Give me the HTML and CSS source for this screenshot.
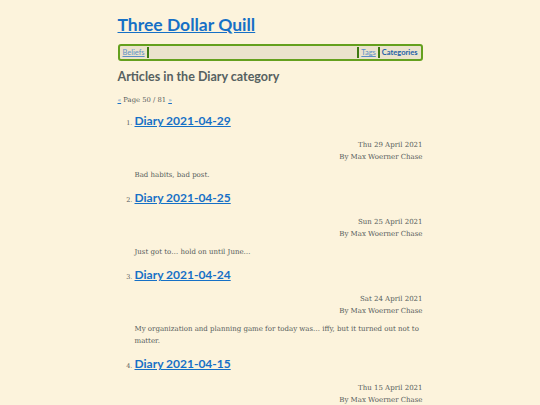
FILE: index.html
```html
<!DOCTYPE html>
<html>
<head>
<meta charset="utf-8">
<link rel="stylesheet" href="styles.css">
</head>
<body>
<div class="page">
  <header class="site-header">
    <h1 class="site-title"><a href="#">Three Dollar Quill</a></h1>
    <nav class="nav">
      <a class="nav-link" href="#">Beliefs</a>
      <span class="sep"></span>
      <span class="spacer"></span>
      <span class="sep"></span>
      <a class="nav-link" href="#">Tags</a>
      <span class="sep"></span>
      <a class="nav-link current" href="#">Categories</a>
    </nav>
  </header>
  <main>
    <h2 class="page-heading">Articles in the Diary category</h2>
    <p class="pager"><a href="#">«</a> Page 50 / 81 <a href="#">»</a></p>
    <ol class="articles">
      <li class="article">
        <h3 class="article-title"><a href="#">Diary 2021-04-29</a></h3>
        <div class="meta">
          <div>Thu 29 April 2021</div>
          <div>By Max Woerner Chase</div>
        </div>
        <p class="summary">Bad habits, bad post.</p>
      </li>
      <li class="article">
        <h3 class="article-title"><a href="#">Diary 2021-04-25</a></h3>
        <div class="meta">
          <div>Sun 25 April 2021</div>
          <div>By Max Woerner Chase</div>
        </div>
        <p class="summary">Just got to… hold on until June…</p>
      </li>
      <li class="article">
        <h3 class="article-title"><a href="#">Diary 2021-04-24</a></h3>
        <div class="meta">
          <div>Sat 24 April 2021</div>
          <div>By Max Woerner Chase</div>
        </div>
        <p class="summary">My organization and planning game for today was… iffy, but it turned out not to matter.</p>
      </li>
      <li class="article">
        <h3 class="article-title"><a href="#">Diary 2021-04-15</a></h3>
        <div class="meta">
          <div>Thu 15 April 2021</div>
          <div>By Max Woerner Chase</div>
        </div>
        <p class="summary">More text.</p>
      </li>
    </ol>
  </main>
</div>
</body>
</html>
```
FILE: styles.css
```css
html, body {
  margin: 0;
  padding: 0;
  background: #fcf3dc;
}
body {
  font-family: "DejaVu Serif", serif;
  color: #555b5b;
}
.page {
  width: 305px;
  margin: 0 auto;
  padding-top: 14px;
}
a {
  color: #1b72c8;
}
.site-title {
  font-family: Lato, "Open Sans", sans-serif;
  font-size: 17.5px;
  font-weight: 700;
  margin: 0;
  line-height: 22px;
}
.site-title a {
  color: #1670c6;
}
.nav {
  margin-top: 8px;
  display: flex;
  align-items: center;
  height: 13px;
  border: 2px solid #64a01e;
  border-radius: 3px;
  background: #ebe3cd;
  padding: 0 1px 0 3px;
  font-family: Lato, "Open Sans", sans-serif;
  font-size: 7.5px;
}
.nav-link {
  color: #5b8fc6;
  padding: 0 2px 0 0;
}
.nav-link.current {
  color: #1d5fa6;
  font-weight: 700;
  text-decoration: none;
  padding-left: 2px;
}
.sep {
  width: 2px;
  height: 11px;
  background: #3d7a12;
}
.spacer {
  flex: 1;
  align-self: stretch;
}
.sep + .nav-link {
  padding-left: 2px;
}
.page-heading {
  font-family: Lato, "Open Sans", sans-serif;
  font-size: 12.5px;
  font-weight: 700;
  color: #566161;
  margin: 8px 0 0;
  line-height: 16px;
}
.pager {
  font-size: 6.8px;
  margin: 10px 0 0;
  line-height: 10px;
  color: #555b5b;
}
.pager a {
  font-size: 6px;
}
.articles {
  margin: 8px 0 0;
  padding-left: 17px;
  font-size: 6.5px;
}
.article {
  margin-bottom: 9px;
}
.article::marker {
  font-size: 6.5px;
}
.article-title {
  font-family: Lato, "Open Sans", sans-serif;
  font-size: 12px;
  font-weight: 700;
  margin: 0;
  line-height: 16px;
}
.article-title a {
  color: #1670c6;
}
.meta {
  text-align: right;
  margin-top: 10px;
  font-size: 7px;
  line-height: 12px;
}
.summary {
  margin: 6px 0 0;
  font-size: 7px;
  line-height: 12px;
}
```
